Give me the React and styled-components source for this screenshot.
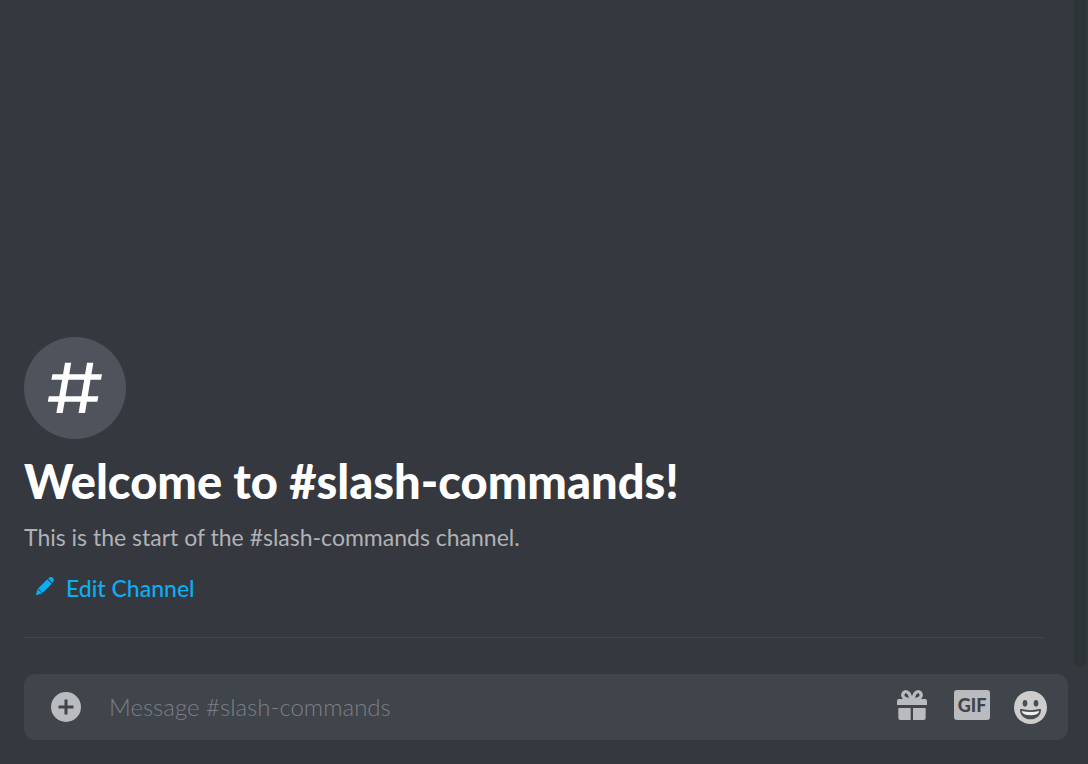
import React from 'react';
import styled, { createGlobalStyle } from 'styled-components';

const GlobalStyle = createGlobalStyle`
  * {
    box-sizing: border-box;
  }

  body {
    margin: 0;
    background: #36393f;
    font-family: Lato, 'Open Sans', sans-serif;
  }
`;

const Chat = styled.main`
  display: flex;
  flex-direction: column;
  min-height: 100vh;
  background: #35383f;
`;

const Scroller = styled.div`
  display: flex;
  flex: 1;
`;

const Messages = styled.section`
  display: flex;
  flex: 1;
  flex-direction: column;
  justify-content: flex-end;
  align-items: flex-start;
  padding: 0 30px 36px 24px;
`;

const ScrollTrack = styled.div`
  width: 12px;
  margin: 0 2px 7px 0;
  border-radius: 0 0 6px 6px;
  background: #2e3537;
`;

const ChannelIcon = styled.div`
  width: 102px;
  height: 102px;
  border-radius: 50%;
  background: #4f545c;
`;

const Title = styled.h1`
  margin: 14px 0 0;
  color: #fff;
  font-size: 47px;
  font-weight: 900;
  line-height: 56px;
`;

const Subtitle = styled.p`
  margin: 12px 0 0;
  color: #b0b2b5;
  font-size: 23px;
  line-height: 32px;
`;

const EditButton = styled.button`
  display: flex;
  align-items: center;
  gap: 12px;
  margin: 17px 0 0;
  padding: 0 12px;
  border: none;
  background: none;
  color: #0caef2;
  font-family: inherit;
  font-size: 23px;
  font-weight: 500;
  line-height: 36px;
  cursor: pointer;

  svg {
    margin-bottom: 4px;
  }
`;

const Divider = styled.hr`
  width: 100%;
  height: 1px;
  margin: 31px 0 0;
  border: none;
  background: #43464a;
`;

const MessageForm = styled.form`
  display: flex;
  align-items: center;
  height: 66px;
  margin: 0 20px 24px 24px;
  padding: 0 21px 0 27px;
  border-radius: 11px;
  background: #40444b;
`;

const MessageInput = styled.input`
  flex: 1;
  min-width: 0;
  margin: 0 24px 0 28px;
  padding: 0;
  border: none;
  outline: none;
  background: none;
  color: #dcddde;
  font-family: inherit;
  font-size: 24px;
  font-weight: 300;
  line-height: 32px;

  &::placeholder {
    color: #7c7f85;
    opacity: 1;
  }
`;

const Tools = styled.div`
  display: flex;
  align-items: center;
  gap: 24px;
`;

const IconButton = styled.button`
  display: flex;
  padding: 0;
  border: none;
  background: none;
  color: ${(props) => props.$color || '#b9bbbe'};
  cursor: pointer;
`;

const GifButton = styled.button`
  width: 36px;
  height: 30px;
  margin: 0 0 4px 3px;
  padding: 0;
  border: none;
  border-radius: 3px;
  background: #b9bbbe;
  color: #40444b;
  font-family: inherit;
  font-size: 18px;
  font-weight: 900;
  line-height: 30px;
  text-align: center;
  cursor: pointer;
`;

const GiftButton = styled(IconButton)`
  margin-bottom: 4px;
`;

function HashIcon() {
  return (
    <svg width="102" height="102" viewBox="0 0 102 102" fill="#fff" aria-hidden="true">
      <path d="M41 25.7h6.2L38.7 76h-6.3z" />
      <path d="M63 25.7h6.3L61 76h-6.4z" />
      <path d="M28.4 37.2H78l-1 5.6H27.4z" />
      <path d="M24.8 59.2h49.6l-1 5.6H23.8z" />
    </svg>
  );
}

function PencilIcon() {
  return (
    <svg width="18" height="18" viewBox="0 0 18 18" fill="currentColor" aria-hidden="true">
      <path d="M12.1 1.6l.7-.7c1.400-1.200 3.200-1 4.200 0s1.200 2.800 0 4.200l-.7.7z" />
      <path d="M11.300 2.300l4.400 4.400-9.100 9.200-4.500-4.500z" />
      <path d="M1.600 11.900l4.500 4.500L.6 18c-.4.1-.7-.2-.6-.6z" />
    </svg>
  );
}

function PlusIcon() {
  return (
    <svg width="30" height="30" viewBox="0 0 30 30" aria-hidden="true">
      <circle cx="15" cy="15" r="15" fill="currentColor" />
      <path d="M15 7.5v15M7.5 15h15" stroke="#40444b" strokeWidth="3" />
    </svg>
  );
}

function GiftIcon() {
  return (
    <svg width="30" height="30" viewBox="0 0 90 90" fill="currentColor" aria-hidden="true">
      <path d="M6 27h78q6 0 6 6v12H0V33q0-6 6-6z" />
      <path d="M4 54h37v36H10q-6 0-6-6zM48 54h38v30q0 6-6 6H48z" />
      <path
        d="M41 29C41 14 34 5 26 5 19 5 16 13 18 19s11 9 23 10zM49 29C49 14 56 5 64 5c7 0 10 8 8 14s-11 9-23 10z"
        fill="none"
        stroke="currentColor"
        strokeWidth="10"
      />
    </svg>
  );
}

function SmileIcon() {
  return (
    <svg width="33" height="33" viewBox="0 0 99 99" aria-hidden="true">
      <circle cx="49.5" cy="49.5" r="49.5" fill="currentColor" />
      <ellipse cx="33" cy="37" rx="7" ry="10" fill="#4a4d50" />
      <ellipse cx="66" cy="37" rx="7" ry="10" fill="#4a4d50" />
      <path d="M18 56q0-3 4-2 27 7 55 0 4-1 4 2c0 17-14 29-31.500 29S18 73 18 56z" fill="#4a4d50" />
      <path d="M23 60q27 6 53 0-3 13-26.500 13T23 60z" fill="#eee" />
    </svg>
  );
}

function App() {
  return (
    <>
      <GlobalStyle />
      <Chat>
        <Scroller>
          <Messages>
            <ChannelIcon>
              <HashIcon />
            </ChannelIcon>
            <Title>Welcome to #slash-commands!</Title>
            <Subtitle>This is the start of the #slash-commands channel.</Subtitle>
            <EditButton type="button">
              <PencilIcon />
              Edit Channel
            </EditButton>
            <Divider />
          </Messages>
          <ScrollTrack />
        </Scroller>
        <MessageForm onSubmit={(e) => e.preventDefault()}>
          <IconButton type="button" aria-label="Upload a file">
            <PlusIcon />
          </IconButton>
          <MessageInput
            type="text"
            aria-label="Message #slash-commands"
            placeholder="Message #slash-commands"
          />
          <Tools>
            <GiftButton type="button" aria-label="Send a gift">
              <GiftIcon />
            </GiftButton>
            <GifButton type="button">GIF</GifButton>
            <IconButton type="button" aria-label="Select emoji" $color="#cdcdcd">
              <SmileIcon />
            </IconButton>
          </Tools>
        </MessageForm>
      </Chat>
    </>
  );
}

export default App;
